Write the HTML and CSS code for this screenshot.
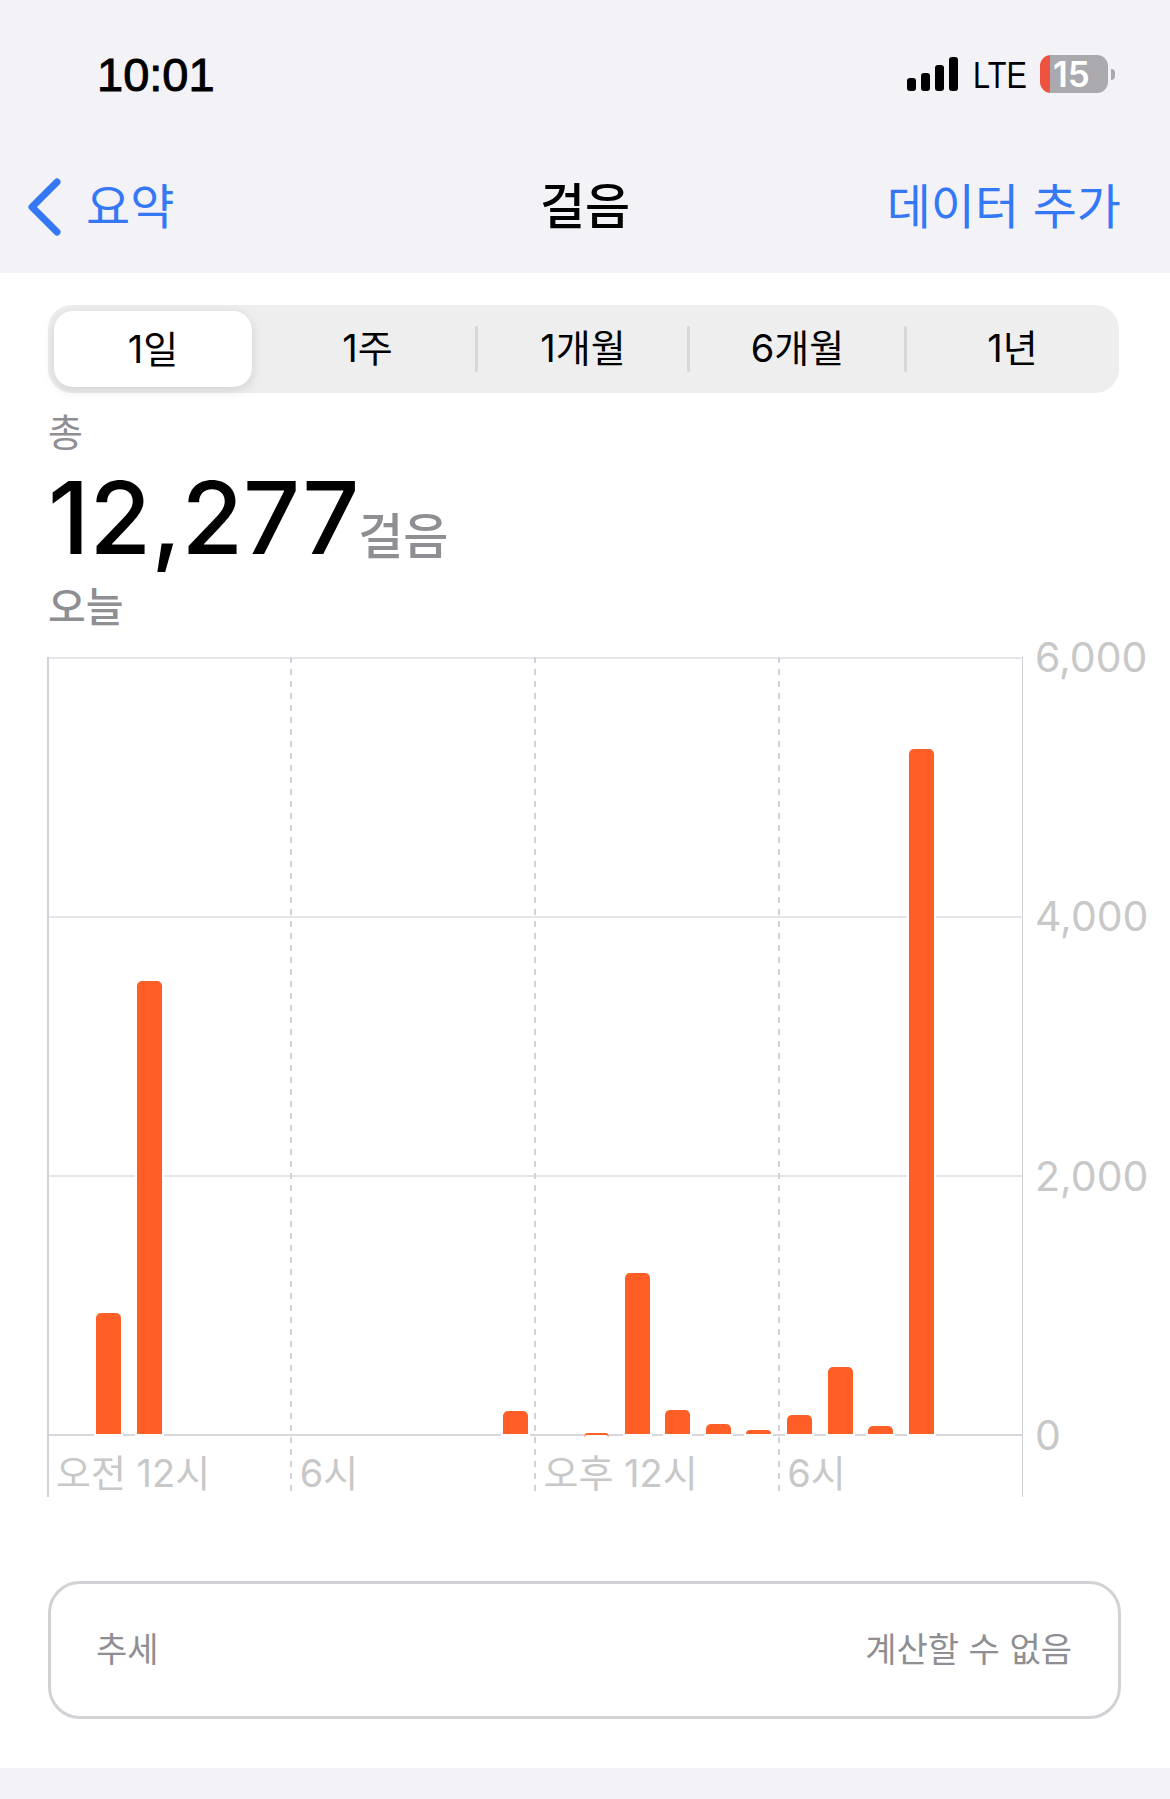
FILE: index.html
```html
<!DOCTYPE html>
<html lang="ko">
<head>
    <meta charset="utf-8">
    <title>걸음</title>
    <link rel="stylesheet" href="styles.css">
</head>
<body>
    <header class="top">
        <div class="status">
            <span class="clock">10:01</span>
            <div class="status-right">
                <div class="signal">
                    <span class="s1"></span>
                    <span class="s2"></span>
                    <span class="s3"></span>
                    <span class="s4"></span>
                </div>
                <span class="lte">LTE</span>
                <div class="battery">
                    <span class="battery-num">15</span>
                </div>
                <span class="battery-nub"></span>
            </div>
        </div>
        <nav class="nav">
            <a class="back">
                <svg class="chevron" width="36" height="60" viewBox="0 0 36 60">
                    <path d="M31 5 L6 30 L31 55" fill="none" stroke="#3478f6" stroke-width="7" stroke-linecap="round" stroke-linejoin="round"/>
                </svg>
                <span>요약</span>
            </a>
            <h1 class="title">걸음</h1>
            <a class="add">데이터 추가</a>
        </nav>
    </header>

    <main class="content">
        <div class="segments">
            <div class="segment active"><span class="pill">1일</span></div>
            <div class="segment sep">1주</div>
            <div class="segment sep">1개월</div>
            <div class="segment sep">6개월</div>
            <div class="segment">1년</div>
        </div>

        <div class="total-label">총</div>
        <div class="total">
            <span class="total-num">12,277</span>
            <span class="total-unit">걸음</span>
        </div>
        <div class="total-day">오늘</div>

        <div class="chart">
            <div class="plot">
                <div class="grid-row"></div>
                <div class="grid-row"></div>
                <div class="grid-row"></div>
                <div class="x-labels">
                    <span>오전 12시</span>
                    <span>6시</span>
                    <span>오후 12시</span>
                    <span>6시</span>
                </div>
                <div class="vlines">
                    <span class="solid"></span>
                    <span class="dashed"></span>
                    <span class="dashed"></span>
                    <span class="dashed"></span>
                </div>
                <div class="bars">
                    <div class="hour"></div>
                    <div class="hour"><div class="bar" style="height: 121px"></div></div>
                    <div class="hour"><div class="bar" style="height: 453px"></div></div>
                    <div class="hour"></div>
                    <div class="hour"></div>
                    <div class="hour"></div>
                    <div class="hour"></div>
                    <div class="hour"></div>
                    <div class="hour"></div>
                    <div class="hour"></div>
                    <div class="hour"></div>
                    <div class="hour"><div class="bar" style="height: 23px"></div></div>
                    <div class="hour"></div>
                    <div class="hour"><div class="bar-tiny"></div></div>
                    <div class="hour"><div class="bar" style="height: 161px"></div></div>
                    <div class="hour"><div class="bar" style="height: 24px"></div></div>
                    <div class="hour"><div class="bar" style="height: 10px"></div></div>
                    <div class="hour"><div class="bar" style="height: 4px"></div></div>
                    <div class="hour"><div class="bar" style="height: 19px"></div></div>
                    <div class="hour"><div class="bar" style="height: 67px"></div></div>
                    <div class="hour"><div class="bar" style="height: 8px"></div></div>
                    <div class="hour"><div class="bar" style="height: 685px"></div></div>
                    <div class="hour"></div>
                    <div class="hour"></div>
                </div>
            </div>
            <div class="y-labels">
                <span>6,000</span>
                <span>4,000</span>
                <span>2,000</span>
                <span>0</span>
            </div>
        </div>

        <div class="trend">
            <span>추세</span>
            <span>계산할 수 없음</span>
        </div>
    </main>

    <div class="bottom"></div>
</body>
</html>
```

FILE: styles.css
```css
body {
    margin: 0;
    width: 1170px;
    height: 1799px;
    overflow: hidden;
    background-color: #fff;
    font-family: Inter, "Noto Sans CJK KR", sans-serif;
    color: #000;
}

/* top area */
.top {
    height: 273px;
    background-color: #f2f2f7;
}
.status {
    height: 150px;
    padding: 52px 55px 0 97px;
    box-sizing: border-box;
    display: flex;
    justify-content: space-between;
    align-items: flex-start;
}
.clock {
    font-family: "Liberation Sans", sans-serif;
    font-size: 47px;
    font-weight: 400;
    line-height: 46px;
    -webkit-text-stroke: 1px #000;
}
.status-right {
    display: flex;
    align-items: center;
    height: 38px;
    margin-top: 3px;
}
.signal {
    display: flex;
    align-items: flex-end;
    gap: 5px;
    height: 34px;
    margin-right: 15px;
}
.signal span {
    width: 9px;
    border-radius: 3px;
    background-color: #000;
}
.s1 { height: 13px; }
.s2 { height: 18px; }
.s3 { height: 26px; }
.s4 { height: 34px; }
.lte {
    font-family: "Liberation Sans", sans-serif;
    font-size: 36px;
    line-height: 38px;
    width: 67px;
    margin-top: 4px;
    transform: scaleX(0.85);
    transform-origin: left center;
}
.battery {
    display: flex;
    align-items: center;
    width: 68px;
    height: 38px;
    border-radius: 11px;
    background-image: linear-gradient(to right, #ee5340 10px, #a9a9ae 10px);
}
.battery-num {
    margin-left: 13px;
    font-size: 35px;
    line-height: 38px;
    font-weight: 600;
    color: #fff;
}
.battery-nub {
    width: 4px;
    height: 11px;
    margin-left: 3px;
    border-radius: 0 6px 6px 0;
    background-color: #a9a9ae;
}

.nav {
    position: relative;
    height: 60px;
    margin-top: 27px;
    padding: 0 49px 0 26px;
    display: flex;
    justify-content: space-between;
    align-items: center;
    font-size: 48px;
}
.back {
    display: flex;
    align-items: center;
    gap: 24px;
    color: #3478f6;
}
.chevron {
    display: block;
}
.title {
    position: absolute;
    left: 0;
    right: 0;
    margin: 0;
    text-align: center;
    font-size: 49px;
    font-weight: 500;
}
.add {
    color: #3478f6;
}
.back span, .add, .title {
    line-height: 60px;
}

/* main */
.content {
    padding: 32px 0 0 48px;
    height: 1495px;
    box-sizing: border-box;
}
.segments {
    width: 1071px;
    height: 88px;
    display: grid;
    grid-template-columns: 210px 219px 212px 217px 213px;
    border-radius: 24px;
    background-color: #eeeeef;
    font-size: 38px;
}
.segment {
    position: relative;
    display: flex;
    justify-content: center;
    align-items: center;
    padding-bottom: 8px;
    box-sizing: border-box;
}
.segment.sep::after {
    content: "";
    position: absolute;
    right: -1px;
    top: 21px;
    bottom: 21px;
    width: 3px;
    border-radius: 1px;
    background-color: #d8d8db;
}
.segment.active {
    padding: 6px;
}
.pill {
    flex: 1;
    align-self: stretch;
    display: flex;
    justify-content: center;
    align-items: center;
    padding-bottom: 6px;
    border-radius: 19px;
    background-color: #fff;
    box-shadow: 0 3px 12px rgba(0, 0, 0, 0.13);
}

.total-label {
    margin-top: 19px;
    font-size: 38px;
    line-height: 40px;
    color: #8e8e93;
}
.total {
    display: flex;
    align-items: baseline;
    height: 110px;
    margin-top: 11px;
    line-height: 110px;
}
.total-num {
    font-size: 100px;
    font-weight: 500;
}
.total-unit {
    margin-left: -1px;
    font-size: 49px;
    font-weight: 500;
    color: #8e8e93;
}
.total-day {
    margin-top: 11px;
    font-size: 41px;
    line-height: 46px;
    font-weight: 500;
    color: #8e8e93;
}

/* chart */
.chart {
    display: flex;
    margin-top: 27px;
}
.plot {
    position: relative;
    width: 975px;
    height: 840px;
}
.grid-row {
    height: 259px;
    box-sizing: border-box;
    border-top: 2px solid #e5e5ea;
}
.x-labels {
    height: 63px;
    box-sizing: border-box;
    border-top: 2px solid #d8d8dc;
    display: grid;
    grid-template-columns: repeat(4, 1fr);
    padding-top: 15px;
    font-size: 38px;
    line-height: 44px;
    color: #c8c8c8;
}
.x-labels span {
    padding-left: 8px;
}
.vlines {
    position: absolute;
    top: 0;
    left: -1px;
    right: 0;
    bottom: 0;
    display: grid;
    grid-template-columns: 243px 244px 244px 1fr;
    border-right: 1px solid #d1d1d6;
}
.vlines .solid {
    width: 2px;
    background-color: #d1d1d6;
}
.vlines .dashed {
    width: 2px;
    background-image: repeating-linear-gradient(to bottom, #d1d1d6 0, #d1d1d6 6px, transparent 6px, transparent 12px);
}
.bars {
    position: absolute;
    top: 0;
    left: 0;
    right: 0;
    height: 777px;
    display: grid;
    grid-template-columns: repeat(24, 1fr);
}
.hour {
    display: flex;
    justify-content: center;
    align-items: flex-end;
}
.bar {
    width: 25px;
    border-radius: 5px 5px 0 0;
    background-color: #ff5f26;
    box-shadow: 0 0 0 2px #fff;
}
.bar-tiny {
    width: 25px;
    height: 4px;
    margin-bottom: -3px;
    box-sizing: border-box;
    border-top: 2px solid #ff5f26;
    border-left: 1px solid #ffb08f;
    border-right: 1px solid #ffb08f;
    border-radius: 5px 5px 0 0;
    background-color: #fff;
}
.y-labels {
    display: flex;
    flex-direction: column;
    justify-content: space-between;
    height: 822px;
    margin-top: -22px;
    margin-left: 12px;
    font-size: 41px;
    line-height: 44px;
    color: #c8c8c8;
}

/* trend card */
.trend {
    width: 1073px;
    height: 138px;
    margin-top: 84px;
    padding: 0 46px 6px 45px;
    box-sizing: border-box;
    display: flex;
    justify-content: space-between;
    align-items: center;
    border: 3px solid #d1d1d6;
    border-radius: 32px;
    font-size: 34px;
    color: #8e8e93;
}

.bottom {
    height: 31px;
    background-color: #f2f2f7;
}
```
